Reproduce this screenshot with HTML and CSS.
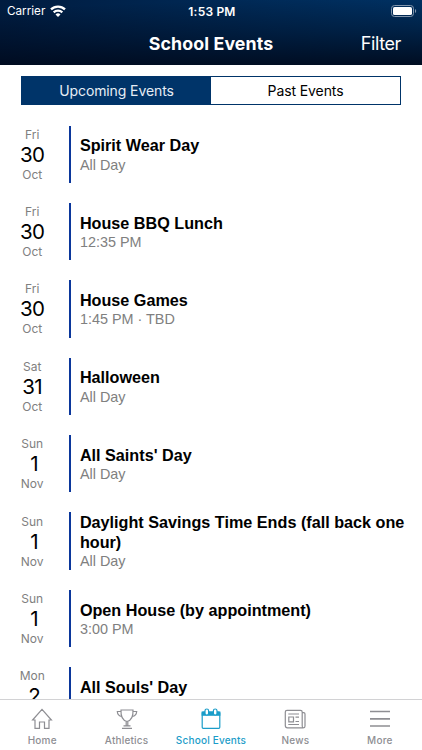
FILE: index.html
```html
<!DOCTYPE html>
<html lang="en">

<head>
    <meta charset="UTF-8">
    <meta name="viewport" content="width=device-width, initial-scale=1.0">
    <title>School Events</title>
    <link rel="stylesheet" href="styles.css">
</head>

<body>
    <header class="header">
        <div class="status-bar">
            <div class="carrier">
                <span>Carrier</span>
                <svg width="16" height="12" viewBox="0 0 16 12" fill="none" stroke="#fff" stroke-width="2.3">
                    <path d="M1 4.4a10 10 0 0 1 14 0" />
                    <path d="M3.7 7.4a6.1 6.1 0 0 1 8.6 0" />
                    <path d="M8 12L5.5 9.5a3.5 3.5 0 0 1 5 0z" fill="#fff" stroke="none" />
                </svg>
            </div>
            <span class="time">1:53 PM</span>
            <svg class="battery" width="26" height="12" viewBox="0 0 26 12">
                <rect x="0.5" y="0.5" width="22" height="11" rx="3" fill="none" stroke="#8296ad" />
                <rect x="2" y="2" width="19" height="8" rx="1.6" fill="#fff" />
                <path d="M24 4v4c1.6-.7 1.6-3.3 0-4z" fill="#8296ad" />
            </svg>
        </div>
        <div class="nav-bar">
            <h1>School Events</h1>
            <a class="filter">Filter</a>
        </div>
    </header>

    <main class="content">
        <div class="segments">
            <div class="segment active">Upcoming Events</div>
            <div class="segment">Past Events</div>
        </div>

        <div class="event">
            <div class="date"><span>Fri</span><strong>30</strong><span>Oct</span></div>
            <div class="details">
                <h2>Spirit Wear Day</h2>
                <p>All Day</p>
            </div>
        </div>
        <div class="event">
            <div class="date"><span>Fri</span><strong>30</strong><span>Oct</span></div>
            <div class="details">
                <h2>House BBQ Lunch</h2>
                <p>12:35 PM</p>
            </div>
        </div>
        <div class="event">
            <div class="date"><span>Fri</span><strong>30</strong><span>Oct</span></div>
            <div class="details">
                <h2>House Games</h2>
                <p>1:45 PM · TBD</p>
            </div>
        </div>
        <div class="event">
            <div class="date"><span>Sat</span><strong>31</strong><span>Oct</span></div>
            <div class="details">
                <h2>Halloween</h2>
                <p>All Day</p>
            </div>
        </div>
        <div class="event">
            <div class="date"><span>Sun</span><strong class="single">1</strong><span>Nov</span></div>
            <div class="details">
                <h2>All Saints' Day</h2>
                <p>All Day</p>
            </div>
        </div>
        <div class="event">
            <div class="date"><span>Sun</span><strong class="single">1</strong><span>Nov</span></div>
            <div class="details">
                <h2>Daylight Savings Time Ends (fall back one<br>hour)</h2>
                <p>All Day</p>
            </div>
        </div>
        <div class="event">
            <div class="date"><span>Sun</span><strong class="single">1</strong><span>Nov</span></div>
            <div class="details">
                <h2>Open House (by appointment)</h2>
                <p>3:00 PM</p>
            </div>
        </div>
        <div class="event">
            <div class="date"><span>Mon</span><strong class="single">2</strong><span>Nov</span></div>
            <div class="details">
                <h2>All Souls' Day</h2>
                <p>All Day</p>
            </div>
        </div>
    </main>

    <nav class="tab-bar">
        <a class="tab">
            <svg viewBox="0 0 24 24">
                <path d="M2.6 13L12 2.3 21.4 13H19v8.3h-4.5V15h-5v6.3H5V13z" />
            </svg>
            <span>Home</span>
        </a>
        <a class="tab">
            <svg viewBox="0 0 24 24">
                <path d="M6 3h12c.3 6-1.6 10.5-6 11.5C7.6 13.5 5.7 9 6 3z" />
                <path d="M6 4.5H2.3c.2 3 1.7 4.5 4.5 5M18 4.5h3.7c-.2 3-1.7 4.5-4.5 5M11.2 14.5v4.3M12.8 14.5v4.3M8.5 18.8h7M7 21.3h10" />
            </svg>
            <span>Athletics</span>
        </a>
        <a class="tab selected">
            <svg viewBox="0 0 24 24">
                <rect x="3.2" y="5" width="17.6" height="16.3" rx="1" />
                <path d="M3.2 5h17.6v3.2H3.2z" fill="currentColor" />
                <rect x="6" y="2" width="3.6" height="6" rx="1.8" fill="#fff" />
                <rect x="14.4" y="2" width="3.6" height="6" rx="1.8" fill="#fff" />
            </svg>
            <span>School Events</span>
        </a>
        <a class="tab">
            <svg viewBox="0 0 24 24">
                <path d="M20 20.8H4.5Q2.3 20.8 2.3 18.5V5Q2.3 3.3 4 3.3h13.5Q19.2 3.3 19.2 5v14q0 1.8 1.4 1.8t1.4-1.8V7q0-1.4-1.4-1.4h-1.4" />
                <path d="M5.8 10h4.7v4.8H5.8zM5.3 7H16M12.5 10.2H16M12.5 14.5H16M5.3 17.5H16" />
            </svg>
            <span>News</span>
        </a>
        <a class="tab">
            <svg viewBox="0 0 24 24" class="menu">
                <path d="M2 4.5h20M2 11.8h20M2 19h20" />
            </svg>
            <span>More</span>
        </a>
    </nav>
</body>

</html>
```

FILE: styles.css
```css
* {
    box-sizing: border-box;
}

body {
    font-family: Inter, sans-serif;
    margin: 0;
    height: 750px;
    display: flex;
    flex-direction: column;
    overflow: hidden;
    background-color: #fff;
    color: #000;
}

h1,
h2,
p {
    margin: 0;
}

.header {
    flex: none;
    height: 65px;
    color: #fff;
    background: linear-gradient(178deg, rgba(0, 0, 10, 0) 10%, rgba(0, 0, 10, 0.35) 55%, rgba(0, 0, 10, 0.75) 100%), linear-gradient(90deg, #001c40, #003468);
}

.status-bar {
    height: 22px;
    padding: 0 5px 0 7px;
    display: grid;
    grid-template-columns: 1fr auto 1fr;
    align-items: center;
    font-size: 12px;
}

.carrier {
    display: flex;
    align-items: center;
    gap: 5px;
    font-size: 11.7px;
}

.time {
    font-weight: 600;
    letter-spacing: 0.2px;
}

.battery {
    justify-self: end;
}

.nav-bar {
    height: 43px;
    padding: 0 21px;
    display: grid;
    grid-template-columns: 1fr auto 1fr;
    align-items: center;
}

.nav-bar h1 {
    grid-column: 2;
    font-size: 17.8px;
    font-weight: 700;
    letter-spacing: 0.1px;
}

.filter {
    justify-self: end;
    font-size: 18px;
    letter-spacing: -0.4px;
}

.content {
    flex: 1;
    min-height: 0;
    overflow: hidden;
    padding-top: 11px;
}

.segments {
    display: flex;
    height: 29px;
    margin: 0 21px 20.5px;
    border: 1px solid #003469;
    font-size: 14px;
    line-height: 27px;
    letter-spacing: -0.1px;
    text-align: center;
}

.segment {
    flex: 1;
}

.segment.active {
    background-color: #003469;
    color: #e6edf5;
}

.event {
    display: flex;
    height: 57.4px;
    margin-bottom: 20px;
}

.date {
    width: 69.4px;
    padding: 1.2px 5px 0 0;
    display: flex;
    flex-direction: column;
    align-items: center;
    font-size: 12px;
    line-height: 16px;
    color: #808080;
}

.date strong {
    font-size: 20.5px;
    font-weight: 400;
    line-height: 24px;
    letter-spacing: -0.5px;
    color: #000;
}

.date .single {
    padding-left: 4px;
}

.details {
    flex: 1;
    display: flex;
    flex-direction: column;
    justify-content: center;
    border-left: 2px solid #0b379b;
    padding: 1.5px 0 0 8.5px;
    font-family: "Liberation Sans", Arial, sans-serif;
    white-space: nowrap;
}

.details h2 {
    font-size: 16.2px;
    line-height: 19.5px;
}

.details p {
    font-size: 14.4px;
    line-height: 18px;
    color: #808080;
}

.tab-bar {
    flex: none;
    height: 51px;
    border-top: 1px solid #d2d2d4;
    background-color: #fff;
    display: flex;
}

.tab {
    flex: 1;
    display: flex;
    flex-direction: column;
    align-items: center;
    padding-top: 7px;
    color: #8e8e93;
    font-size: 10px;
    font-weight: 500;
    line-height: 14px;
    letter-spacing: 0.2px;
    white-space: nowrap;
}

.tab svg {
    width: 24px;
    height: 24px;
    margin-bottom: 2px;
    fill: none;
    stroke: currentColor;
    stroke-width: 1.2;
}

.tab .menu {
    stroke-width: 1.7;
}

.tab.selected {
    color: #1b9dc9;
}
```
